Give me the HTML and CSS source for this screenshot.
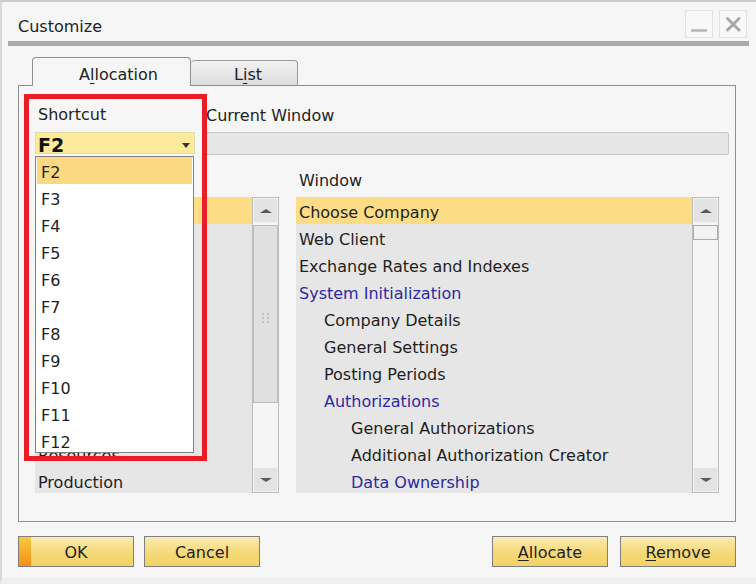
FILE: index.html
```html
<!DOCTYPE html>
<html lang="en">
<head>
<meta charset="utf-8">
<title>Customize</title>
<link rel="stylesheet" href="styles.css">
</head>
<body>
<div class="window">
  <div class="titlebar">
    <span class="title">Customize</span>
    <div class="wbtns">
      <span class="wbtn"><svg width="26" height="26" viewBox="0 0 26 26"><line x1="5" y1="19.5" x2="21" y2="19.5" stroke="#b6b6b6" stroke-width="2.5"/></svg></span>
      <span class="wbtn"><svg width="26" height="26" viewBox="0 0 26 26"><path d="M7.5 7.5 L19 19 M19 7.5 L7.5 19" stroke="#a8a8a8" stroke-width="3" stroke-linecap="round"/></svg></span>
    </div>
  </div>
  <div class="titlerule"></div>
  <div class="content">
    <div class="tabs">
      <div class="tab active">A<u>l</u>location</div>
      <div class="tab">L<u>i</u>st</div>
    </div>
    <div class="panel">
      <div class="topgrid">
        <span class="lbl lbl-shortcut">Shortcut</span>
        <span class="lbl lbl-current">Current Window</span>
        <div class="combo"><span class="combo-val">F2</span><span class="combo-arrow"></span></div>
        <div class="field"></div>
      </div>
      <div class="lbl lbl-window">Window</div>
      <div class="lists">
        <div class="list list-left">
          <div class="rows">
            <div class="row sel"></div>
            <div class="row"></div>
            <div class="row"></div>
            <div class="row"></div>
            <div class="row"></div>
            <div class="row"></div>
            <div class="row"></div>
            <div class="row"></div>
            <div class="row"></div>
            <div class="row">Resources</div>
            <div class="row">Production</div>
          </div>
          <div class="sbar">
            <div class="sbtn"><span class="tri-up"></span></div>
            <div class="thumb thumb-big"><span class="grip"><i></i><i></i><i></i><i></i><i></i><i></i></span></div>
            <div class="track"></div>
            <div class="sbtn"><span class="tri-down"></span></div>
          </div>
        </div>
        <div class="list list-right">
          <div class="rows">
            <div class="row sel">Choose Company</div>
            <div class="row">Web Client</div>
            <div class="row">Exchange Rates and Indexes</div>
            <div class="row folder">System Initialization</div>
            <div class="row l2">Company Details</div>
            <div class="row l2">General Settings</div>
            <div class="row l2">Posting Periods</div>
            <div class="row l2 folder">Authorizations</div>
            <div class="row l3">General Authorizations</div>
            <div class="row l3">Additional Authorization Creator</div>
            <div class="row l3 folder">Data Ownership</div>
          </div>
          <div class="sbar">
            <div class="sbtn"><span class="tri-up"></span></div>
            <div class="thumb thumb-small"></div>
            <div class="track"></div>
            <div class="sbtn"><span class="tri-down"></span></div>
          </div>
        </div>
      </div>

      <div class="dropdown">
        <div class="ditem sel">F2</div>
        <div class="ditem">F3</div>
        <div class="ditem">F4</div>
        <div class="ditem">F5</div>
        <div class="ditem">F6</div>
        <div class="ditem">F7</div>
        <div class="ditem">F8</div>
        <div class="ditem">F9</div>
        <div class="ditem">F10</div>
        <div class="ditem">F11</div>
        <div class="ditem">F12</div>
      </div>
      <div class="highlight-box"></div>
    </div>
    <div class="buttons">
      <button class="btn btn-default">OK</button>
      <button class="btn">Cancel</button>
      <span class="spacer"></span>
      <button class="btn"><u>A</u>llocate</button>
      <button class="btn btn-remove"><u>R</u>emove</button>
    </div>
  </div>
</div>
</body>
</html>
```
FILE: styles.css
```css
* { box-sizing: border-box; }
html, body { margin: 0; padding: 0; background: #f6f6f6; }
body { width: 756px; height: 584px; overflow: hidden; }

.window {
  width: 756px;
  height: 584px;
  background: #f6f6f6;
  border-top: 2px solid #cbcbcb;
  border-left: 2px solid #d8d8d8;
  border-bottom: 6px solid #eeeeee;
  font-family: "DejaVu Sans", sans-serif;
  font-size: 16px;
  color: #1e1e1e;
  display: flex;
  flex-direction: column;
}

.titlebar {
  height: 39px;
  display: flex;
  justify-content: space-between;
  align-items: flex-start;
  padding: 0 9px 0 16px;
}
.title { margin-top: 15px; line-height: 20px; color: #222; }
.wbtns { display: flex; gap: 6px; margin-top: 8px; }
.wbtn {
  width: 28px; height: 28px;
  border: 1px solid #e2e2e2;
  background: #f8f8f8;
  display: block;
}
.wbtn svg { display: block; }

.titlerule {
  height: 5px;
  margin: 0 7px 0 6px;
  background: #ababab;
}

.content { padding: 12px 20px 0 16px; }

.tabs {
  display: flex;
  align-items: flex-end;
  height: 28px;
  margin-left: 14px;
  position: relative;
  z-index: 2;
  margin-bottom: -1px;
}
.tab {
  border: 1px solid #9a9a9a;
  border-bottom: none;
  border-radius: 4px 4px 0 0;
  text-align: center;
  color: #222;
  line-height: 20px;
}
.tab.active {
  width: 159px;
  height: 29px;
  background: #f6f6f6;
  padding: 7px 0 0 14px;
  border-color: #8f8f8f;
}
.tab:not(.active) {
  width: 107px;
  height: 25px;
  margin-bottom: 1px;
  background: linear-gradient(#f2f2f2, #dcdcdc);
  padding: 4px 0 0 8px;
  border-left: none;
}
.tab u { text-decoration-thickness: 1px; text-underline-offset: 3px; }

.panel {
  position: relative;
  width: 718px;
  height: 437px;
  border: 1px solid #8f8f8f;
  padding: 17px 6px 0 16px;
}

.topgrid {
  display: grid;
  grid-template-columns: 160px 1fr;
  column-gap: 11px;
  row-gap: 7px;
}
.lbl { line-height: 20px; color: #222; }
.lbl-shortcut { padding: 2px 0 0 3px; }
.lbl-current { padding-top: 3px; margin-bottom: -1px; }

.combo {
  height: 22px;
  background: #fdeb9b;
  border: 1px solid #e6dca8;
  display: flex;
  justify-content: space-between;
  align-items: flex-start;
  padding: 3px 4px 0 2px;
}
.combo-val { font-weight: bold; font-size: 19px; line-height: 19px; color: #111; }
.combo-arrow {
  margin-top: 7px;
  width: 0; height: 0;
  border-left: 4.5px solid transparent;
  border-right: 4.5px solid transparent;
  border-top: 5px solid #333;
}
.field {
  height: 23px;
  background: #e6e6e6;
  border: 1px solid #c6c6c6;
  border-radius: 2px;
}

.lbl-window { margin-top: 16px; margin-left: 264px; }

.lists {
  display: flex;
  gap: 17px;
  margin-top: 6px;
  height: 296px;
}
.list {
  display: flex;
  background: #e6e6e6;
  height: 296px;
}
.list-left { width: 244px; }
.list-right { width: 423px; }
.rows { flex: 1; overflow: hidden; }
.row {
  height: 27px;
  line-height: 23px;
  padding: 4px 0 0 3px;
  white-space: nowrap;
  color: #1e1e1e;
}
.row.sel { background: #fddc86; }
.row.folder { color: #2e29a3; }
.row.l2 { padding-left: 28px; }
.row.l3 { padding-left: 55px; }

.sbar {
  width: 27px;
  border: 1px solid #bcbcbc;
  background: #f5f5f5;
  display: flex;
  flex-direction: column;
  padding: 0;
}
.sbtn {
  height: 25px;
  background: #e3e3e3;
  border: 1px solid #f2f2f2;
  display: flex;
  align-items: center;
  justify-content: center;
}
.tri-up {
  width: 0; height: 0;
  border-left: 6px solid transparent;
  border-right: 6px solid transparent;
  border-bottom: 4px solid #5a5a5a;
}
.tri-down {
  width: 0; height: 0;
  border-left: 6px solid transparent;
  border-right: 6px solid transparent;
  border-top: 4px solid #5a5a5a;
}
.thumb { margin: 2px 0 0 0; border: 1px solid #bdbdbd; }
.thumb-big {
  height: 178px;
  background: #e0e0e0;
  display: flex;
  align-items: center;
  justify-content: center;
}
.thumb-small { height: 15px; background: #f2f2f2; border-color: #ababab; }
.grip {
  display: grid;
  grid-template-columns: 2px 2px;
  gap: 2px 3px;
  margin-top: 8px;
}
.grip i { width: 2px; height: 2px; background: #c2c2c2; display: block; }
.track { flex: 1; }

.dropdown {
  position: absolute;
  left: 16px;
  top: 70px;
  width: 159px;
  height: 297px;
  border: 1px solid #818181;
  background: #ffffff;
  padding: 0 1px;
  overflow: hidden;
  z-index: 3;
}
.ditem {
  height: 27px;
  line-height: 23px;
  padding: 4px 0 0 4px;
  color: #1e1e1e;
}
.ditem.sel { background: #fbd983; }

.highlight-box {
  position: absolute;
  left: 5px;
  top: 8px;
  width: 183px;
  height: 367px;
  border: 5px solid #ec1c24;
  z-index: 4;
}

.buttons {
  display: flex;
  margin-top: 14px;
  height: 31px;
}
.spacer { flex: 1; }
.btn {
  width: 116px;
  height: 31px;
  border: 1px solid #7f7f7f;
  background: linear-gradient(#fbebb2, #f5d977 55%, #f3d366);
  font-family: "DejaVu Sans", sans-serif;
  font-size: 16px;
  color: #222;
  padding: 2px 0 0 0;
  margin: 0;
}
.btn + .btn { margin-left: 10px; }
.btn-remove { margin-left: 12px !important; }
.btn-default {
  background:
    linear-gradient(#fbca3a, #f0901a) left / 12px 100% no-repeat,
    linear-gradient(#fbebb2, #f5d977 55%, #f3d366);
}
.btn u { text-underline-offset: 2px; }
```
